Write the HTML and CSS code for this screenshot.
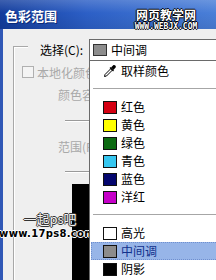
FILE: index.html
```html
<!DOCTYPE html>
<html>
<head>
<meta charset="utf-8">
<link rel="stylesheet" href="styles.css">
</head>
<body>
<div class="window">
  <div class="titlebar">
    <span class="title">色彩范围</span>
    <div class="wm-top">
      <span class="wm-top-cn">网页教学网</span>
      <span class="wm-top-en">WWW.WEBJX.COM</span>
    </div>
  </div>
  <div class="body">
    <div class="edge"></div>
    <div class="content">
      <div class="select-row">
        <span class="select-label">选择(C):</span>
        <div class="dropdown">
          <span class="dd-swatch"></span>
          <span class="dd-text">中间调</span>
        </div>
      </div>
      <div class="group">
        <div class="corner"></div>
        <div class="check-row">
          <span class="checkbox"></span>
          <span class="dim">本地化颜色簇</span>
        </div>
        <div class="field-label dim">颜色容差(F):</div>
        <div class="slider"></div>
        <div class="field-label second dim">范围(R):</div>
        <div class="slider second"></div>
        <div class="preview"></div>
      </div>
    </div>
  </div>

  <div class="wm-bottom">
    <span class="wm-bottom-cn">一起ps吧</span>
    <span class="wm-bottom-en">www.17ps8.com</span>
  </div>

  <div class="menu">
    <div class="item">
      <svg class="icon" width="14" height="14" viewBox="0 0 14 14">
        <path d="M1.5 12.5 L2 10.5 L8 4.5 L9.5 6 L3.5 12 Z" fill="none" stroke="#000" stroke-width="1"/>
        <path d="M8 3.5 L10.5 1 Q12.5 0.5 13 3 L10.5 6 Z" fill="#000"/>
        <path d="M7 3.5 L10.5 7" stroke="#000" stroke-width="1.2"/>
      </svg>
      <span class="label">取样颜色</span>
    </div>
    <div class="sep"></div>
    <div class="item"><span class="sw red"></span><span class="label">红色</span></div>
    <div class="item"><span class="sw yellow"></span><span class="label">黄色</span></div>
    <div class="item"><span class="sw green"></span><span class="label">绿色</span></div>
    <div class="item"><span class="sw cyan"></span><span class="label">青色</span></div>
    <div class="item"><span class="sw blue"></span><span class="label">蓝色</span></div>
    <div class="item"><span class="sw magenta"></span><span class="label">洋红</span></div>
    <div class="sep"></div>
    <div class="item"><span class="sw white"></span><span class="label">高光</span></div>
    <div class="item selected"><span class="sw gray"></span><span class="label">中间调</span></div>
    <div class="item"><span class="sw black"></span><span class="label">阴影</span></div>
  </div>
</div>
</body>
</html>
```

FILE: styles.css
```css
* { box-sizing: border-box; }
html, body {
  margin: 0;
  padding: 0;
  width: 216px;
  height: 280px;
  overflow: hidden;
  background: #efefef;
  font-family: "Noto Sans CJK SC", "Liberation Sans", sans-serif;
  font-size: 12px;
  color: #000;
}
.window {
  position: relative;
  width: 216px;
  height: 280px;
  display: flex;
  flex-direction: column;
  overflow: hidden;
}
.titlebar {
  height: 29px;
  flex: none;
  display: flex;
  align-items: flex-start;
  justify-content: space-between;
  padding-left: 5px;
  background:
    linear-gradient(to bottom, rgba(255,255,255,0.18), rgba(255,255,255,0) 45%, rgba(0,0,0,0.08)),
    linear-gradient(to right, #123c9c 0%, #2c5fc6 40%, #4a7fd8 100%);
}
.title {
  color: #fff;
  font-weight: bold;
  font-size: 13px;
  line-height: 13px;
  margin-top: 9px;
  text-shadow: 1px 1px 0 #0a2a78;
}
.wm-top {
  display: flex;
  flex-direction: column;
  align-items: center;
  width: 84px;
  margin-right: 8px;
  margin-top: 8px;
}
.wm-top-cn {
  color: #fff;
  font-size: 12px;
  line-height: 13px;
  font-weight: bold;
  text-shadow: -1px 0 0 #000, 1px 0 0 #000, 0 -1px 0 #000, 0 1px 0 #000;
}
.wm-top-en {
  color: #fff;
  font-family: "DejaVu Sans Mono", monospace;
  font-size: 8px;
  line-height: 8px;
  margin-top: 2px;
  font-weight: bold;
  letter-spacing: 0px;
  text-shadow: -1px 0 0 #000, 1px 0 0 #000, 0 -1px 0 #000, 0 1px 0 #000;
}
.body {
  flex: 1;
  display: flex;
}
.edge {
  width: 3px;
  flex: none;
  background: #3158b6;
}
.content {
  flex: 1;
  display: flex;
  flex-direction: column;
}
.select-row {
  display: flex;
  align-items: center;
  margin-top: 10px;
  height: 22px;
}
.select-label {
  margin-left: 37px;
  width: 49px;
  line-height: 14px;
}
.dropdown {
  flex: 1;
  height: 22px;
  display: flex;
  align-items: center;
  background: #fff;
  border: 1px solid #6a6a6a;
  border-right: none;
}
.dd-swatch {
  width: 14px;
  height: 12px;
  margin-left: 3px;
  background: #8d8d8d;
  border: 1px solid #333;
}
.dd-text {
  margin-left: 4px;
  line-height: 14px;
}
.group {
  margin-top: -15px;
  margin-left: 10px;
  flex: 1;
  display: flex;
  flex-direction: column;
  border-left: 1px solid #a8a8a8;
  box-shadow: inset 1px 0 0 #fff;
}
.corner {
  width: 14px;
  height: 2px;
  border-top: 1px solid #a8a8a8;
  border-bottom: 1px solid #fff;
}
.check-row {
  display: flex;
  align-items: center;
  height: 14px;
  margin-top: 17px;
  margin-left: 8px;
}
.checkbox {
  width: 12px;
  height: 12px;
  border: 1px solid #b0b0b0;
  background: #f4f4f4;
  margin-right: 3px;
}
.dim { color: #a9a9a9; }
.field-label {
  height: 14px;
  line-height: 14px;
  margin-top: 9px;
  margin-left: 44px;
  white-space: nowrap;
}
.field-label.second { margin-top: 18px; }
.slider {
  height: 2px;
  margin-top: 18px;
  margin-left: 51px;
  border-top: 1px solid #9a9a9a;
  border-bottom: 1px solid #fff;
}
.slider.second { margin-top: 17px; }
.preview {
  margin-top: 11px;
  margin-left: 58px;
  flex: 1;
  background: #000;
}
.wm-bottom {
  position: absolute;
  left: 4px;
  top: 212px;
  width: 86px;
  display: flex;
  flex-direction: column;
  align-items: center;
}
.wm-bottom-cn {
  color: #f2f2f2;
  font-size: 13px;
  line-height: 14px;
  text-shadow: -1px 0 0 #333, 1px 0 0 #333, 0 -1px 0 #333, 0 1px 0 #333;
  margin-left: 6px;
}
.wm-bottom-en {
  color: #000;
  font-family: "DejaVu Sans", sans-serif;
  font-weight: bold;
  font-size: 10px;
  line-height: 10px;
  margin-top: 3px;
  letter-spacing: 0.3px;
  text-shadow: -1px 0 0 #fff, 1px 0 0 #fff, 0 -1px 0 #fff, 0 1px 0 #fff;
}
.menu {
  position: absolute;
  left: 89px;
  top: 61px;
  right: 0;
  bottom: 0;
  background: #fff;
  border-left: 1px solid #6a6a6a;
  padding-top: 1px;
  display: flex;
  flex-direction: column;
}
.item {
  height: 18px;
  flex: none;
  display: flex;
  align-items: center;
}
.icon {
  margin-left: 13px;
  width: 14px;
  height: 14px;
}
.sw {
  width: 14px;
  height: 13px;
  margin-left: 13px;
  border: 1px solid #111;
}
.label {
  margin-left: 4px;
  line-height: 14px;
}
.sep {
  height: 18px;
  flex: none;
  padding-top: 8px;
  margin-left: 3px;
}
.sep::after {
  content: "";
  display: block;
  border-top: 1px solid #a6a6a6;
}
.red { background: #d40012; }
.yellow { background: #ffff00; }
.green { background: #0c6a12; }
.cyan { background: #36c6ef; }
.blue { background: #04066e; }
.magenta { background: #c500c8; }
.white { background: #fff; }
.gray { background: #8c8c8c; }
.black { background: #000; }
.selected {
  margin-left: 1px;
  background: #97b5e8;
  border-top: 1px dotted #6f8fcf;
  border-bottom: 1px dotted #6f8fcf;
  border-left: 1px dotted #6f8fcf;
}
.selected .sw { margin-left: 11px; }
.selected .label { color: #12318c; }
```
